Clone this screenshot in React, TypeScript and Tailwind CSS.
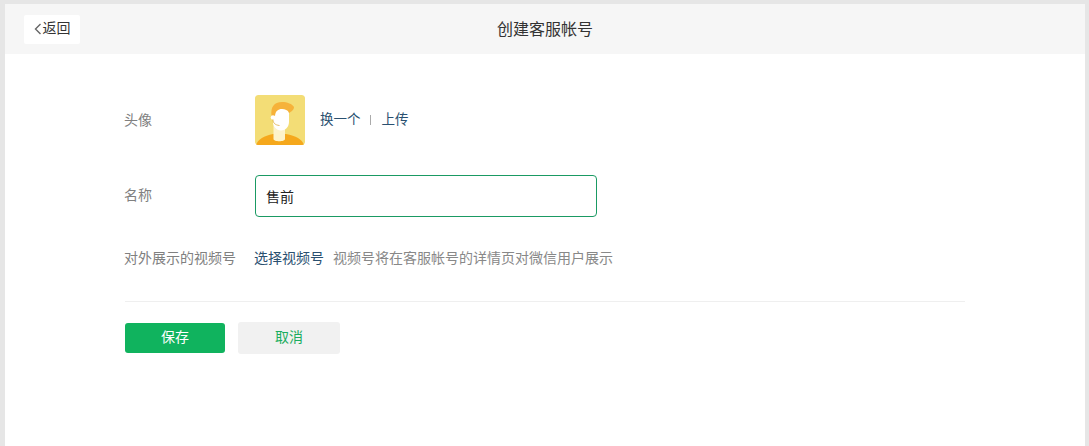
const fontStack = { fontFamily: '"Noto Sans CJK SC", "Noto Sans", sans-serif' };

function Avatar() {
  return (
    <svg width="50" height="50" viewBox="0 0 50 50" className="block rounded-[3px]">
      <rect width="50" height="50" rx="3" fill="#f3dd76" />
      <path d="M1 50 C3 44 9 41 18 39 L31 39 C41 41 47 44 49 50 Z" fill="#f5a81c" />
      <path d="M18.500 28 L18.500 44 C18.500 47 30 47 30 44 L30 28 Z" fill="#fdf3c9" />
      <path d="M18 16 C20 12 33 12 34 17 L34 27 C34 32 30 35.500 26 35.500 C21 35.500 18 31 18 27 Z" fill="#ffffff" />
      <path d="M16.500 21 C15.500 12 19 7 27 7 C32 7 37.500 9 39 12 C39 15 36.500 16.500 34 18 C33 15 30 14 27 14 C23 14 20.500 16 20 21 Z" fill="#f6b23a" />
      <circle cx="18" cy="22.500" r="2.300" fill="#fff" />
      <path d="M18 24.500 C18 28 20 30 24.500 30.500" fill="none" stroke="#d9a02a" strokeWidth="0.700" />
    </svg>
  );
}

export default function App() {
  return (
    <div className="h-[446px] w-[1089px] overflow-hidden bg-[#e6e6e6] pt-[4px] pr-[4px] pl-[5px]" style={fontStack}>
      <div className="h-full bg-white">
        <div className="grid h-[50px] grid-cols-[1fr_auto_1fr] items-center bg-[#f6f6f6] px-[19px]">
          <div>
            <button className="flex h-[29px] w-[56px] items-center justify-center rounded-[2px] bg-white pr-[1px] pb-[3px] text-[14px] text-[#333]">
              <svg width="10" height="12" viewBox="0 0 10 12" fill="none" stroke="#666" strokeWidth="1.400" className="mt-[3px]">
                <path d="M7.500 1 L2.500 6 L7.500 11" />
              </svg>
              返回
            </button>
          </div>
          <h1 className="pb-[3px] text-[16px] font-normal text-[#333]">创建客服帐号</h1>
          <div />
        </div>

        <div className="px-[120px] pt-[41px]">
          <div className="flex h-[50px] items-center text-[14px]">
            <div className="-ml-px w-[131px] pb-[2px] text-[#808080]">头像</div>
            <Avatar />
            <div className="ml-[15px] flex items-center pb-[3px] text-[13.500px] text-[#2a5070]">
              <span>换一个</span>
              <span className="mt-[3px] mr-[11px] ml-[9px] h-[10px] w-px bg-[#aaa]" />
              <span>上传</span>
            </div>
          </div>

          <div className="mt-[30px] flex items-center text-[14px]">
            <div className="-ml-px w-[131px] pb-[3px] text-[#808080]">名称</div>
            <div className="flex h-[42px] w-[342px] items-center rounded-[4px] border border-[#1a9a63] px-[10px] text-[#222]">
              售前
            </div>
          </div>

          <div className="mt-[32px] -ml-px flex h-[20px] items-center pb-[3px] text-[14px]">
            <div className="w-[130px] text-[#808080]">对外展示的视频号</div>
            <span className="text-[#2a5070]">选择视频号</span>
            <span className="ml-[9px] text-[#888]">视频号将在客服帐号的详情页对微信用户展示</span>
          </div>

          <div className="mt-[32px] h-px w-[840px] bg-[#efefef]" />

          <div className="mt-[20px] flex items-center">
            <button className="h-[30px] w-[100px] rounded-[3px] bg-[#10b35e] pb-[3px] text-[14px] text-white">保存</button>
            <button className="ml-[13px] h-[32px] w-[102px] rounded-[3px] bg-[#f1f1f1] pb-[3px] text-[14px] text-[#1aad60]">取消</button>
          </div>
        </div>
      </div>
    </div>
  );
}
